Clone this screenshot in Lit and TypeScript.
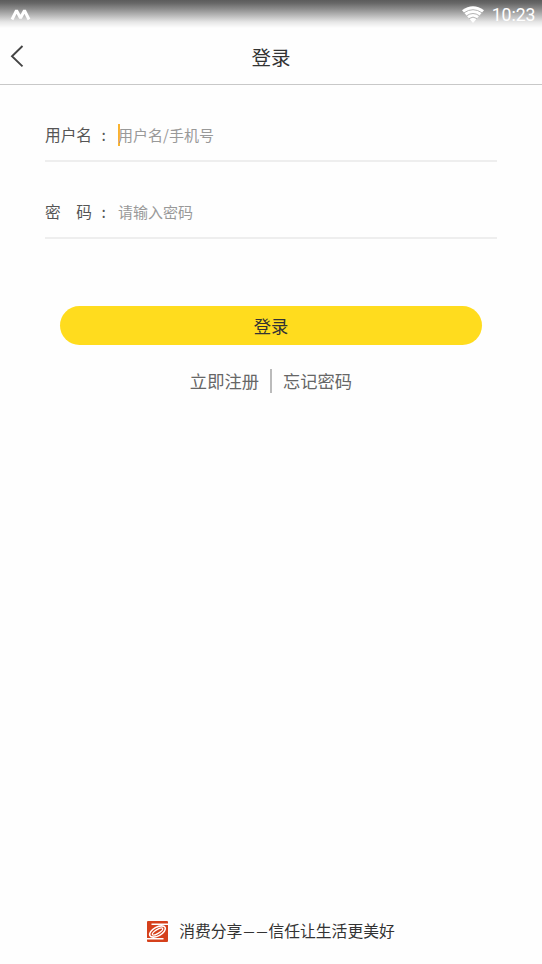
import { LitElement, html, css } from "lit";
import { customElement } from "lit/decorators.js";

@customElement("app-root")
class AppRoot extends LitElement {
  static styles = css`
    :host {
      display: flex;
      flex-direction: column;
      height: 100vh;
      background: #fefefe;
      color: #333;
      font-family: "Noto Sans CJK SC", sans-serif;
      white-space: nowrap;
      overflow: hidden;
    }
    .status {
      flex: none;
      box-sizing: border-box;
      height: 29px;
      padding: 0 6.5px 0 10px;
      display: flex;
      align-items: center;
      background: linear-gradient(#5c5c5c 0, #666 3px, #8c8c8c 9px, #bcbcbc 16px, #e6e6e6 22px, #fefefe 28px);
    }
    .status svg { display: block; }
    .signal { margin-top: -1px; }
    .wifi { margin-left: auto; margin-top: -1px; }
    .time {
      margin-left: 7.5px;
      font: 17.6px/28px Roboto, sans-serif;
      color: #fff;
    }
    .header {
      flex: none;
      box-sizing: border-box;
      height: 56px;
      border-bottom: 1px solid #c8c8c8;
      display: grid;
      grid-template-columns: 40px 1fr 40px;
      align-items: center;
    }
    .back { display: block; margin-left: 10px; margin-top: -2px; }
    .title {
      text-align: center;
      font-size: 19.5px;
      line-height: 56px;
    }
    .form {
      display: flex;
      flex-direction: column;
      padding: 0 45px;
    }
    .field {
      box-sizing: border-box;
      height: 77px;
      padding-top: 25px;
      border-bottom: 2px solid #eee;
      display: flex;
      align-items: center;
      line-height: 24px;
    }
    .label {
      width: 47px;
      display: flex;
      justify-content: space-between;
      font-size: 15.7px;
      color: #555;
    }
    .colon { width: 26px; font-size: 15.7px; color: #555; text-indent: 9.5px; }
    .caret { width: 2px; height: 22px; background: #f9b32f; margin-right: -2px; }
    .hint { font-size: 15px; color: #999; }
    .submit {
      height: 39px;
      margin: 67px 15px 0;
      border-radius: 20px;
      background: #ffdc1e;
      font-size: 17.3px;
      line-height: 39px;
      text-align: center;
    }
    .links {
      margin-top: 23px;
      display: flex;
      justify-content: center;
      align-items: center;
      font-size: 17.3px;
      line-height: 26px;
      color: #666;
    }
    .bar { width: 2px; height: 24px; background: #bbb; margin: 0 11px; }
    .footer {
      margin-top: auto;
      height: 66px;
      display: flex;
      justify-content: center;
      align-items: center;
      font-size: 15.8px;
      line-height: 24px;
      gap: 11px;
    }
    .footer svg { display: block; }
    .slogan { display: flex; }
    .dash {
      font-family: "Noto Sans", sans-serif;
      font-size: 11px;
      letter-spacing: 2px;
      padding-left: 1px;
      margin-right: -1px;
    }
  `;

  render() {
    return html`
      <div class="status">
        <svg class="signal" width="21" height="14" viewBox="0 0 21 14" fill="none" stroke="#fff" stroke-width="3" stroke-linejoin="bevel">
          <path d="M2 12.5 6.5 3.5 10.5 11 14.5 3.5 19 12.5" />
        </svg>
        <svg class="wifi" width="22" height="17" viewBox="0 0 22 17">
          <path d="M0 4.3Q11-3.7 22 4.3L11 17Z" fill="#fff" />
          <path d="M2 6.8Q11 .6 20 6.8M4.6 9.8Q11 5.2 17.4 9.8M7 12.6Q11 9.6 15 12.6" fill="none" stroke="#aaa" stroke-width=".9" />
        </svg>
        <span class="time">10:23</span>
      </div>
      <div class="header">
        <svg class="back" width="14" height="24" viewBox="0 0 14 24" fill="none" stroke="#444" stroke-width="1.9">
          <path d="M12.5 2 2 12.2 12.5 22.4" />
        </svg>
        <span class="title">登录</span>
      </div>
      <div class="form">
        <div class="field">
          <span class="label">用户名</span><span class="colon">:</span>
          <span class="caret"></span><span class="hint">用户名/手机号</span>
        </div>
        <div class="field">
          <span class="label"><span>密</span><span>码</span></span><span class="colon">:</span>
          <span class="hint">请输入密码</span>
        </div>
        <div class="submit">登录</div>
        <div class="links"><span>立即注册</span><span class="bar"></span><span>忘记密码</span></div>
      </div>
      <div class="footer">
        <svg width="21" height="21" viewBox="0 0 21 21">
          <rect width="21" height="21" rx="1" fill="#d5401b" />
          <g fill="none" stroke="#fff">
            <path d="M4.5 3.2H21M0 17.8H16.5" stroke-width="1.5" />
            <ellipse cx="10.5" cy="10.5" rx="8.6" ry="4.4" transform="rotate(-28 10.5 10.5)" stroke-width="1.6" />
            <ellipse cx="10.5" cy="10.5" rx="6" ry="1.9" transform="rotate(-32 10.5 10.5)" stroke-width="1.3" />
          </g>
        </svg>
        <span class="slogan">消费分享<span class="dash">——</span>信任让生活更美好</span>
      </div>
    `;
  }
}
